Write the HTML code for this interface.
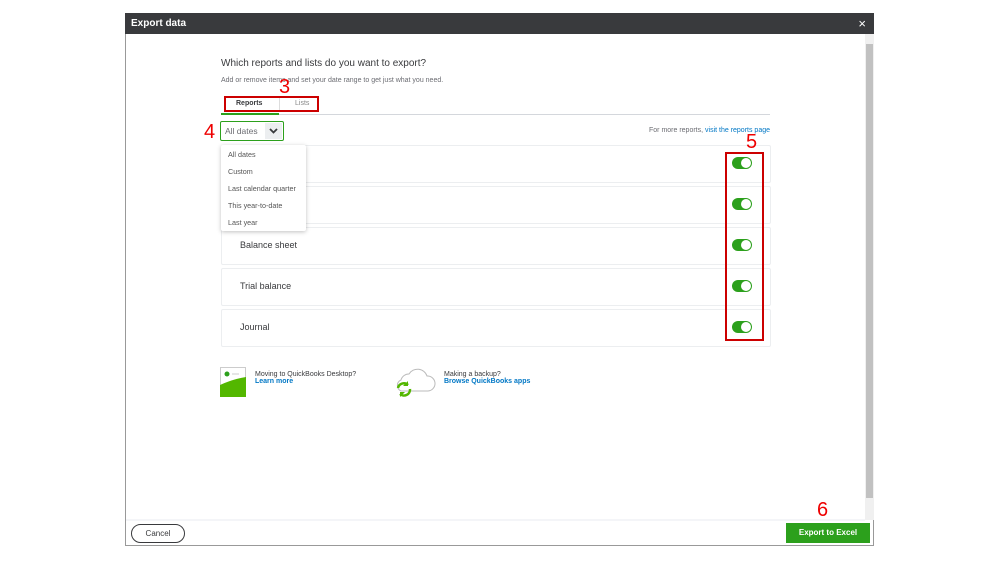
<!DOCTYPE html>
<html><head><style>
body{margin:0;width:999px;height:562px;background:#fff;position:relative;font-family:"Liberation Sans",sans-serif;overflow:hidden}
.a{position:absolute}
.row{position:absolute;left:221px;width:548px;height:36px;border:1px solid #eceef0;border-radius:2px;background:#fff}
.row span{position:absolute;left:18px;top:12px;font-size:9px;color:#393a3d}
.tg{position:absolute;left:510px;top:11px;width:20px;height:12px;border-radius:6px;background:#2ca01c}
.tg:after{content:"";position:absolute;right:1px;top:1px;width:10px;height:10px;border-radius:50%;background:#fff}
.red{position:absolute;color:#e00;font-size:20px;font-family:"Liberation Sans",sans-serif}
.dd div{height:17px;line-height:17px;padding-left:7px;font-size:7.2px;color:#555}
</style></head><body>
<div class="a" style="left:125px;top:13px;width:749px;height:533px;border:1px solid #999;box-sizing:border-box;background:#fff"></div>
<div class="a" style="left:125px;top:13px;width:749px;height:21px;background:#393a3d;color:#fff;font-size:10px;font-weight:bold;line-height:21px;padding-left:6px;box-sizing:border-box">Export data<span style="position:absolute;right:8px;top:0;font-weight:normal;font-size:13px">×</span></div>
<div class="a" style="left:865px;top:34px;width:9px;height:486px;background:#f0f0f0"></div>
<div class="a" style="left:866px;top:44px;width:7px;height:454px;background:#c1c1c1"></div>
<div class="a" style="left:221px;top:58px;font-size:10px;color:#393a3d">Which reports and lists do you want to export?</div>
<div class="a" style="left:221px;top:77px;font-size:7px;color:#6b6c72">Add or remove items and set your date range to get just what you need.</div>
<div class="a" style="left:221px;top:114px;width:549px;height:1px;background:#d4d7dc"></div>
<div class="a" style="left:221px;top:113px;width:58px;height:2px;background:#2ca01c"></div>
<div class="a" style="left:224px;top:96px;width:95px;height:16px;border:2px solid #c00;box-sizing:border-box"></div>
<div class="a" style="left:236px;top:100px;font-size:7px;color:#393a3d;font-weight:bold">Reports</div>
<div class="a" style="left:279px;top:98px;width:1px;height:12px;background:#ddd"></div>
<div class="a" style="left:295px;top:100px;font-size:7px;color:#888">Lists</div>
<div class="red" style="left:279px;top:76px">3</div>
<div class="red" style="left:204px;top:121px">4</div>
<div class="a" style="left:220px;top:121px;width:64px;height:20px;border:1px solid #2ca01c;border-radius:2px;box-sizing:border-box"></div>
<div class="a" style="left:225px;top:126px;font-size:8.5px;color:#6b6c72">All dates</div>
<div class="a" style="left:265px;top:123px;width:17px;height:16px;background:#eceef0"></div>
<svg class="a" style="left:268px;top:127px" width="11" height="8"><path d="M2 2l3.5 3.5L9 2" stroke="#393a3d" stroke-width="1.8" fill="none"/></svg>
<div class="a" style="right:229px;top:127px;font-size:7px;color:#6b6c72;white-space:nowrap">For more reports, <span style="color:#0077c5">visit the reports page</span></div>
<div class="row" style="top:145px"><div class="tg"></div></div>
<div class="row" style="top:186px"><div class="tg"></div></div>
<div class="row" style="top:227px"><span>Balance sheet</span><div class="tg"></div></div>
<div class="row" style="top:268px"><span>Trial balance</span><div class="tg"></div></div>
<div class="row" style="top:309px"><span>Journal</span><div class="tg"></div></div>
<div class="a dd" style="left:221px;top:145px;width:85px;height:86px;background:#fff;box-shadow:0 1px 4px rgba(0,0,0,.25);border-radius:2px;padding-top:1px;box-sizing:border-box">
<div>All dates</div><div>Custom</div><div>Last calendar quarter</div><div>This year-to-date</div><div>Last year</div></div>
<div class="a" style="left:725px;top:152px;width:39px;height:189px;border:2px solid #c00;box-sizing:border-box"></div>
<div class="red" style="left:746px;top:131px">5</div>
<svg class="a" style="left:220px;top:367px" width="27" height="30"><rect x="0.5" y="0.5" width="25" height="29" fill="#fff" stroke="#ccc"/><circle cx="7" cy="7" r="2.5" fill="#2ca01c"/><path d="M12 7h7" stroke="#ccc"/><path d="M0 30V18Q13 12 26 10v20z" fill="#53b700"/></svg>
<div class="a" style="left:255px;top:371px;font-size:7px;color:#393a3d">Moving to QuickBooks Desktop?<br><b style="color:#0077c5">Learn more</b></div>
<svg class="a" style="left:394px;top:366px" width="42" height="32"><path d="M7 25a6 6 0 0 1 0-11a8 8 0 0 1 8-6a10 10 0 0 1 18 2a7 7 0 0 1 1 15z" fill="#fff" stroke="#bbb"/><path d="M4 22a6 6 0 0 1 10-3M16 23a6 6 0 0 1-10 5" stroke="#53b700" stroke-width="2.5" fill="none"/><path d="M14 15v5h-5z M6 31v-5h5z" fill="#53b700"/></svg>
<div class="a" style="left:444px;top:371px;font-size:7px;color:#393a3d">Making a backup?<br><b style="color:#0077c5">Browse QuickBooks apps</b></div>
<div class="a" style="left:126px;top:519px;width:739px;height:2px;background:#f4f5f8"></div>
<div class="a" style="left:131px;top:524px;width:54px;height:19px;border:1px solid #393a3d;border-radius:10px;box-sizing:border-box;font-size:8px;text-align:center;line-height:17px;color:#393a3d">Cancel</div>
<div class="a" style="left:786px;top:523px;width:84px;height:20px;background:#2ca01c;color:#fff;font-size:8px;font-weight:bold;text-align:center;line-height:20px">Export to Excel</div>
<div class="red" style="left:817px;top:499px">6</div>
</body></html>
